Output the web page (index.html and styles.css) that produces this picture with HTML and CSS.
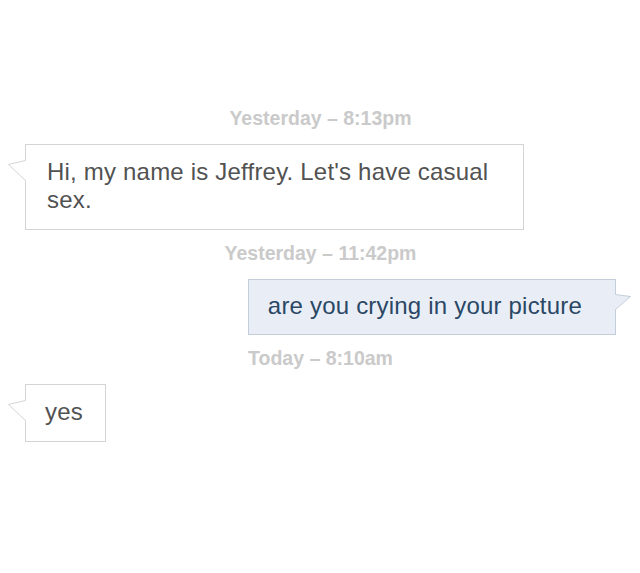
FILE: index.html
```html
<!DOCTYPE html>
<html lang="en">

<head>
    <meta charset="UTF-8">
    <meta name="viewport" content="width=device-width, initial-scale=1.0">
    <title>Messages</title>
    <link rel="stylesheet" href="styles.css">
</head>

<body>
    <div class="thread">
        <!-- First message -->
        <p class="stamp">Yesterday – 8:13pm</p>
        <div class="bubble them first">
            <svg class="tail" width="18" height="21" viewBox="0 0 18 21">
                <polygon points="18,0.5 0.5,4.5 18,20.5" fill="#fff"/>
                <polyline points="17.5,0.5 0.5,4.5 17.5,20.5" fill="none" stroke="#d4d4d4"/>
            </svg>
            Hi, my name is Jeffrey. Let's have casual sex.
        </div>

        <!-- Reply -->
        <p class="stamp">Yesterday – 11:42pm</p>
        <div class="bubble me">
            <svg class="tail" width="17" height="17" viewBox="0 0 17 17">
                <polygon points="0,0.5 15.5,2.5 0,15.5" fill="#e9eef6"/>
                <polyline points="0.5,0.5 15.5,2.5 0.5,15.5" fill="none" stroke="#c4cedb"/>
            </svg>
            are you crying in your picture
        </div>

        <p class="stamp">Today – 8:10am</p>
        <div class="bubble them last">
            <svg class="tail" width="18" height="21" viewBox="0 0 18 21">
                <polygon points="18,0.5 0.5,4.5 18,20.5" fill="#fff"/>
                <polyline points="17.5,0.5 0.5,4.5 17.5,20.5" fill="none" stroke="#d4d4d4"/>
            </svg>
            yes
        </div>
    </div>
</body>

</html>
```

FILE: styles.css
```css
body {
    font-family: 'Liberation Sans', Arial, sans-serif;
    margin: 0;
    padding: 0;
    background-color: #fff;
}

.thread {
    display: flex;
    flex-direction: column;
    padding: 107px 24px 0 25px;
}

.stamp {
    margin: 0 0 15px;
    font-size: 19.5px;
    line-height: 22px;
    font-weight: bold;
    color: #cacaca;
    text-align: center;
}

.bubble {
    position: relative;
    box-sizing: border-box;
    max-width: 499px;
    margin-bottom: 12px;
    padding: 12px 22px 14px 19px;
    font-size: 24px;
    line-height: 28px;
    letter-spacing: 0.2px;
}

.them {
    align-self: flex-start;
    background-color: #fff;
    border: 1px solid #d4d4d4;
    color: #525252;
}

.them.first {
    width: 499px;
    padding-top: 13px;
    padding-bottom: 15px;
    padding-left: 21px;
}

.them.last {
    padding-top: 13px;
    padding-bottom: 15px;
}

.me {
    align-self: flex-end;
    background-color: #e9eef6;
    border: 1px solid #c4cedb;
    color: #2a4765;
    padding-right: 33px;
}

.them .tail {
    position: absolute;
    right: 100%;
    top: 15px;
}

.me .tail {
    position: absolute;
    left: 100%;
    top: 14px;
}
```
